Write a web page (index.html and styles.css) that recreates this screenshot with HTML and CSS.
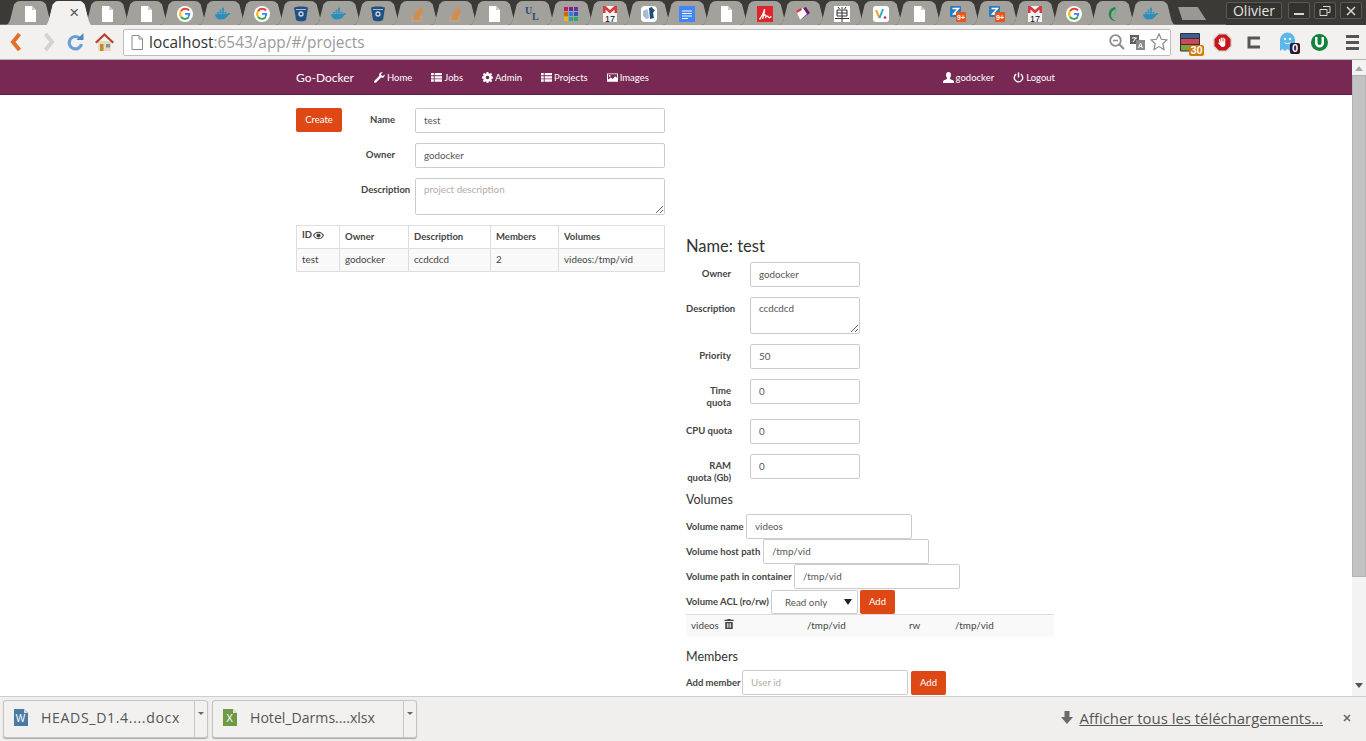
FILE: index.html
```html
<!DOCTYPE html>
<html lang="en">
<head>
    <meta charset="UTF-8">
    <meta name="viewport" content="width=device-width, initial-scale=1.0">
    <title>Go-Docker</title>
    <link rel="stylesheet" href="styles.css">
</head>

<body>
    <svg class="defs" aria-hidden="true">
        <symbol id="i-doc" viewBox="0 0 16 16"><path d="M3 0h7l4 4v12H3z" fill="#fff"/><path d="M10 0l4 4h-4z" fill="#c9c9c9"/></symbol>
        <symbol id="i-google" viewBox="0 0 16 16"><circle cx="8" cy="8" r="8" fill="#fff"/><path d="M12 4.500A5 5 0 0 0 4 5.200" fill="none" stroke="#ea4335" stroke-width="2"/><path d="M4 5.200a5 5 0 0 0 0 5.600" fill="none" stroke="#fbbc05" stroke-width="2"/><path d="M4 10.800a5 5 0 0 0 7.800.4" fill="none" stroke="#34a853" stroke-width="2"/><path d="M8 7h5.200c.2 2-.4 3.200-1.400 4.200L10.400 10c.5-.4.800-.8.900-1.300H8z" fill="#4285f4"/></symbol>
        <symbol id="i-docker" viewBox="0 0 16 16"><path d="M0 8h12c.5-1 1.500-1.300 3-1 0 1-.7 2-2 2.200C12 12 9 13.500 5.500 13.500 2 13.500.5 11 0 8z" fill="#2a8fbd"/><path d="M2 6h2v1.500H2zM4.500 6h2v1.500h-2zM7 6h2v1.500H7zM4.500 3.800h2v1.800h-2zM7 3.800h2v1.800H7zM7 1.800h2v1.700H7zM9.500 6h2v1.500h-2z" fill="#2a8fbd"/></symbol>
        <symbol id="i-bucket" viewBox="0 0 16 16"><path d="M1 1.500C4 0 12 0 15 1.500L13 14c-2 1.700-8 1.700-10 0z" fill="#205081"/><circle cx="8" cy="8" r="2" fill="none" stroke="#cfd8e3" stroke-width="1.300"/><path d="M3 3.500h10" stroke="#cfd8e3" stroke-width=".8"/></symbol>
        <symbol id="i-so" viewBox="0 0 16 16"><path d="M3 10v5h9v-5" fill="none" stroke="#c9a27e" stroke-width="1.300"/><path d="M5 13h5.500M5 10.800l5.500.6M5.500 8.300l5.300 1.500M6.800 5.700l4.800 2.800M8.800 3.300l3.800 4M11.500 1.500l2 5" stroke="#e8862e" stroke-width="1.500"/></symbol>
        <symbol id="i-grid" viewBox="0 0 16 16"><path d="M1 1h4v4H1z" fill="#c2185b"/><path d="M6 1h4v4H6z" fill="#7b1fa2"/><path d="M11 1h4v4h-4z" fill="#5e35b1"/><path d="M1 6h4v4H1z" fill="#c56a12"/><path d="M6 6h4v4H6z" fill="#1e88e5"/><path d="M11 6h4v4h-4z" fill="#3f51b5"/><path d="M1 11h4v4H1z" fill="#fbb300"/><path d="M6 11h4v4H6z" fill="#26a69a"/><path d="M11 11h4v4h-4z" fill="#22b35e"/></symbol>
        <symbol id="i-gmail" viewBox="0 0 16 16"><path d="M1 0h14v16H1z" fill="#f4f4f4"/><path d="M1 0h2.500L8 4l4.500-4H15v7h-2.500V3.500L8 7.500 3.500 3.500V7H1z" fill="#d8393b"/></symbol>
        <symbol id="i-france" viewBox="0 0 16 16"><rect width="16" height="16" rx="4" fill="#fff"/><path d="M2 5l4-2 1 2 1 7-3 1-3-3z" fill="#a7bcd0"/><path d="M8 2l3-1 1 2 2 1-2 3 1 5-4 1z" fill="#1f4e79"/></symbol>
        <symbol id="i-gdoc" viewBox="0 0 16 16"><rect width="16" height="16" rx="1" fill="#4285f4"/><path d="M3 5h10M3 7.500h10M3 10h10M3 12.500h6" stroke="#fff" stroke-width="1"/></symbol>
        <symbol id="i-acrobat" viewBox="0 0 16 16"><rect width="16" height="16" fill="#e0242c"/><path d="M2.500 13.500C5 10 7 6 7.500 3c.5 3-1.500 8-2 10M7 9.500c1.500-1 2-.5 1.800 1.500 1-1 2-1.500 2.500 0 .5 1 2 .5 3-.5" fill="none" stroke="#fff" stroke-width="1.300"/></symbol>
        <symbol id="i-book" viewBox="0 0 16 16"><path d="M1 5l10-4 4 6-10 7z" fill="#6a1b7a"/><path d="M1 5l7-3 4 6-7 6z" fill="#fff"/><path d="M1 5l5-3 1 2-5 3z" fill="#d8393b"/></symbol>
        <symbol id="i-kanji" viewBox="0 0 16 16"><rect width="16" height="16" fill="#fff"/><path d="M4 1l1.500 2M8 1v2M12 1l-1.500 2M3 4h10v6H3zM3 7h10M8 4v12M1 12.500h14" fill="none" stroke="#333" stroke-width="1"/></symbol>
        <symbol id="i-vee" viewBox="0 0 16 16"><rect width="16" height="16" rx="3" fill="#fff"/><path d="M3 4l3.500 8" stroke="#f5a623" stroke-width="2"/><path d="M6.500 12L10 3" stroke="#22b3c9" stroke-width="2"/><circle cx="12" cy="11.500" r="1.300" fill="#d0215f"/></symbol>
        <symbol id="i-zotero" viewBox="0 0 16 16"><rect width="11" height="11" rx="1" fill="#2a7cc0"/><path d="M2.500 2.500h6L3.500 8H9" fill="none" stroke="#fff" stroke-width="1.500"/><rect x="6" y="6" width="10" height="10" rx="1" fill="#e8561e"/></symbol>
        <symbol id="i-leaf" viewBox="0 0 16 16"><path d="M10 1C5 2 3 6 4 10s4 5 7 5c-3-1-5-3-5-6s2-5 5-6z" fill="#1c8a4b"/><path d="M12 4c-2 1-3 3-2 6" fill="none" stroke="#57b87c" stroke-width="1.300"/></symbol>
        <symbol id="g-wrench" viewBox="0 0 12 12"><path d="M11.500 2.600L9.700 4.400 8 3.900 7.600 2.300 9.400.5C7.800-.1 6 .8 5.700 2.500c-.1.600 0 1.200.1 1.700L.5 9.500c-.6.600-.6 1.300-.1 1.900.6.600 1.400.6 2 0l5.300-5.300c.5.200 1.100.2 1.700.1 1.700-.4 2.600-2 2.100-3.600z"/></symbol>
        <symbol id="g-list" viewBox="0 0 12 12"><path d="M0 1h3v2.500H0zM4 1h8v2.500H4zM0 4.500h3V7H0zM4 4.500h8V7H4zM0 8h3v2.500H0zM4 8h8v2.500H4z"/></symbol>
        <symbol id="g-cog" viewBox="0 0 12 12"><path fill-rule="evenodd" d="M5 0h2l.3 1.600 1 .4L9.700 1l1.400 1.400-1 1.400.4 1L12 5v2l-1.500.3-.4 1 1 1.400-1.400 1.400-1.400-1-1 .4L7 12H5l-.3-1.500-1-.4-1.400 1L.9 9.700l1-1.400-.4-1L0 7V5l1.500-.3.4-1-1-1.300L2.300 1l1.400 1 1-.4zM6 4a2 2 0 1 0 0 4 2 2 0 0 0 0-4z"/></symbol>
        <symbol id="g-picture" viewBox="0 0 12 12"><path fill-rule="evenodd" d="M0 1.500h12v9H0zM1 2.500v6l3-2.500 2 1.500 3-3 2 2v-4zM3 3.300a1 1 0 1 1 0 2 1 1 0 0 1 0-2z"/></symbol>
        <symbol id="g-user" viewBox="0 0 12 12"><path d="M6 0c1.700 0 2.700 1.300 2.700 3S7.800 6.300 7.500 7c0 1 3.500 1.500 4.500 3v2H0v-2c1-1.500 4.500-2 4.500-3-.3-.7-1.200-2.300-1.200-4S4.300 0 6 0z"/></symbol>
        <symbol id="g-off" viewBox="0 0 12 12"><path d="M5.200.5h1.600V6H5.200z"/><path d="M3.500 2.300a4.600 4.600 0 1 0 5 0" fill="none" stroke="currentColor" stroke-width="1.500"/></symbol>
        <symbol id="g-eye" viewBox="0 0 12 12"><path fill-rule="evenodd" d="M6 2c3 0 5 2 6 4-1 2-3 4-6 4S1 8 0 6c1-2 3-4 6-4zM1.300 6C2.200 7.500 3.800 9 6 9s3.800-1.500 4.700-3C9.800 4.500 8.200 3 6 3S2.200 4.500 1.300 6zM6 3.700a2.300 2.300 0 1 1 0 4.600 2.300 2.300 0 0 1 0-4.600z"/></symbol>
        <symbol id="g-trash" viewBox="0 0 12 12"><path d="M4 0h4v1h3.500v1.500H.5V1H4zM1.500 3.500h9V12h-9zM3.500 5v5.500h1V5zM5.500 5v5.500h1V5zM7.500 5v5.500h1V5z"/></symbol>
    </svg>

    <div class="app">
        <div class="tabstrip">
            <div class="tabs">
                <div class="tab"><div class="tab-face"><svg class="fav"><use href="#i-doc"/></svg></div></div>
                <div class="tab tab-active"><div class="tab-face"><span class="tab-close">&times;</span></div></div>
                <div class="tab"><div class="tab-face"><svg class="fav"><use href="#i-doc"/></svg></div></div>
                <div class="tab"><div class="tab-face"><svg class="fav"><use href="#i-doc"/></svg></div></div>
                <div class="tab"><div class="tab-face"><svg class="fav"><use href="#i-google"/></svg></div></div>
                <div class="tab"><div class="tab-face"><svg class="fav"><use href="#i-docker"/></svg></div></div>
                <div class="tab"><div class="tab-face"><svg class="fav"><use href="#i-google"/></svg></div></div>
                <div class="tab"><div class="tab-face"><svg class="fav"><use href="#i-bucket"/></svg></div></div>
                <div class="tab"><div class="tab-face"><svg class="fav"><use href="#i-docker"/></svg></div></div>
                <div class="tab"><div class="tab-face"><svg class="fav"><use href="#i-bucket"/></svg></div></div>
                <div class="tab"><div class="tab-face"><svg class="fav"><use href="#i-so"/></svg></div></div>
                <div class="tab"><div class="tab-face"><svg class="fav"><use href="#i-so"/></svg></div></div>
                <div class="tab"><div class="tab-face"><svg class="fav"><use href="#i-doc"/></svg></div></div>
                <div class="tab"><div class="tab-face"><svg class="fav" viewBox="0 0 16 16"><text x="0" y="8" class="fav-serif">U</text><text x="7" y="14" class="fav-serif">L</text></svg></div></div>
                <div class="tab"><div class="tab-face"><svg class="fav"><use href="#i-grid"/></svg></div></div>
                <div class="tab"><div class="tab-face"><svg class="fav"><use href="#i-gmail"/><text x="8" y="15.500" class="fav-num">17</text></svg></div></div>
                <div class="tab"><div class="tab-face"><svg class="fav"><use href="#i-france"/></svg></div></div>
                <div class="tab"><div class="tab-face"><svg class="fav"><use href="#i-gdoc"/></svg></div></div>
                <div class="tab"><div class="tab-face"><svg class="fav"><use href="#i-doc"/></svg></div></div>
                <div class="tab"><div class="tab-face"><svg class="fav"><use href="#i-acrobat"/></svg></div></div>
                <div class="tab"><div class="tab-face"><svg class="fav"><use href="#i-book"/></svg></div></div>
                <div class="tab"><div class="tab-face"><svg class="fav"><use href="#i-kanji"/></svg></div></div>
                <div class="tab"><div class="tab-face"><svg class="fav"><use href="#i-vee"/></svg></div></div>
                <div class="tab"><div class="tab-face"><svg class="fav"><use href="#i-doc"/></svg></div></div>
                <div class="tab"><div class="tab-face"><svg class="fav"><use href="#i-zotero"/><text x="11" y="14" class="fav-badge">9+</text></svg></div></div>
                <div class="tab"><div class="tab-face"><svg class="fav"><use href="#i-zotero"/><text x="11" y="14" class="fav-badge">9+</text></svg></div></div>
                <div class="tab"><div class="tab-face"><svg class="fav"><use href="#i-gmail"/><text x="8" y="15.500" class="fav-num">17</text></svg></div></div>
                <div class="tab"><div class="tab-face"><svg class="fav"><use href="#i-google"/></svg></div></div>
                <div class="tab"><div class="tab-face"><svg class="fav"><use href="#i-leaf"/></svg></div></div>
                <div class="tab"><div class="tab-face"><svg class="fav"><use href="#i-docker"/></svg></div></div>
                <div class="new-tab"></div>
            </div>
            <div class="window-btns">
                <div class="win-btn win-user">Olivier</div>
                <div class="win-btn win-small">
                    <svg width="12" height="12" viewBox="0 0 12 12"><path d="M1 8h10v2H1z" fill="#d8d8d4"/></svg>
                </div>
                <div class="win-btn win-small">
                    <svg width="12" height="12" viewBox="0 0 12 12"><path d="M4 1.500h7v6H8.500M1 4.500h7v6H1z" fill="none" stroke="#d8d8d4"/></svg>
                </div>
                <div class="win-btn win-close">
                    <svg width="12" height="12" viewBox="0 0 12 12"><path d="M2 2l8 8M10 2l-8 8" stroke="#d8d8d4" stroke-width="1.500"/></svg>
                </div>
            </div>
        </div>

        <div class="toolbar">
            <svg class="tool tool-back" width="12" height="20" viewBox="0 0 12 20"><path d="M9.500 2L3 10l6.500 8" fill="none" stroke="#e2702a" stroke-width="4"/></svg>
            <svg class="tool tool-forward" width="12" height="20" viewBox="0 0 12 20"><path d="M2.500 2L9 10l-6.500 8" fill="none" stroke="#d4d3d0" stroke-width="4"/></svg>
            <svg class="tool tool-reload" width="17" height="18" viewBox="0 0 17 18"><path d="M13 5.500A6.200 6.200 0 1 0 14.500 11" fill="none" stroke="#6b9fd4" stroke-width="3.200"/><path d="M9.500 7h7V0z" fill="#4f86c0"/></svg>
            <svg class="tool tool-home" width="19" height="18" viewBox="0 0 19 18"><path d="M3 8h13v10H3z" fill="#e6d9c0"/><path d="M0 9l9.500-9L19 9l-1.500 1.500-8-7.500-8 7.500z" fill="#b8402c"/><path d="M5 11h3.500v7H5z" fill="#c78a28"/><path d="M11 11h4v3.500h-4z" fill="#8a8f96"/></svg>
            <div class="urlbar">
                <svg class="url-page" width="12" height="15" viewBox="0 0 12 15"><path d="M1 .5h7l3.500 3.500v10.500H1z" fill="#fff" stroke="#8a8a8a"/><path d="M8 .5V4h3.500" fill="none" stroke="#8a8a8a"/></svg>
                <span class="url-host">localhost</span><span class="url-rest">:6543/app/#/projects</span>
                <svg class="url-zoom" width="16" height="16" viewBox="0 0 16 16"><circle cx="6.500" cy="6.500" r="5.300" fill="none" stroke="#8f8f8f" stroke-width="1.800"/><path d="M4 6.500h5" stroke="#8f8f8f" stroke-width="1.500"/><path d="M10.500 10.500L15 15" stroke="#8f8f8f" stroke-width="2.200"/></svg>
                <svg class="url-translate" width="15" height="15" viewBox="0 0 15 15"><path d="M0 0h9v9H0z" fill="#5f5f5f"/><path d="M6 5h9v10H6z" fill="#8a8a8a"/><path d="M2 3h5M4.500 2v1M3 7l3-4" stroke="#fff" fill="none"/><path d="M8.500 13l2-5 2 5M9.500 11.500h2" stroke="#fff" fill="none"/></svg>
                <svg class="url-star" width="18" height="18" viewBox="0 0 18 18"><path d="M9 1l2.400 5.300 5.600.6-4.200 3.800 1.200 5.800L9 13.600l-5 2.900 1.200-5.800L1 6.900l5.600-.6z" fill="#fff" stroke="#8a8a8a" stroke-width="1.200"/></svg>
            </div>
            <div class="ext ext-stack">
                <svg width="20" height="19" viewBox="0 0 20 19"><path d="M1 0h18v6H1z" fill="#3e5c94"/><path d="M1 6h18v6H1z" fill="#c9495a"/><path d="M1 12h18v6H1z" fill="#7ea338"/><path d="M1 5.500h18M1 11.500h18M.5.500h19v17.500H.500z" fill="none" stroke="#333"/></svg>
                <span class="ext-badge badge-orange">30</span>
            </div>
            <svg class="ext-stop" width="19" height="19" viewBox="0 0 19 19"><path d="M5.500 0h8L19 5.500v8L13.500 19h-8L0 13.500v-8z" fill="#d8d8d8"/><path d="M6 1.500h7L17.500 6v7L13 17.500H6L1.500 13V6z" fill="#c8141b"/><path d="M6 6h1.200v3H6zM7.700 4.800h1.200V9H7.700zM9.400 4.500h1.200V9H9.400zM11.100 5.500h1.200V9h-1.200zM6 8.500h6.300v3c0 1.500-1 2.500-2.500 2.500-1.300 0-2-.6-2.500-1.500L5 10l.8-.5 1 1z" fill="#fff"/></svg>
            <svg class="ext-c" width="14" height="13" viewBox="0 0 14 13"><path d="M13 2H2v9h11" fill="none" stroke="#555" stroke-width="3"/></svg>
            <div class="ext ext-ghost">
                <svg width="17" height="20" viewBox="0 0 17 20"><path d="M1 8a7.500 7.500 0 0 1 15 0v11l-2.500-2-2.500 2-2.500-2L6 19l-2.500-2L1 19z" fill="#5cb8e8"/><circle cx="6" cy="7" r="1.200" fill="#fff"/><circle cx="11" cy="7" r="1.200" fill="#fff"/><path d="M5.500 10.500c1.500 1.500 4.500 1.500 6 0" fill="none" stroke="#fff"/></svg>
                <span class="ext-badge badge-dark">0</span>
            </div>
            <svg class="ext-torrent" width="17" height="17" viewBox="0 0 17 17"><circle cx="8.500" cy="8.500" r="8.500" fill="#11823b"/><path d="M4 3v6a4.500 4.500 0 0 0 9 0V3h-2.500v6a2 2 0 0 1-4 0V3z" fill="#fff"/><path d="M7.500 0h2v4h-2z" fill="#11823b"/></svg>
            <div class="menu-btn"><span></span><span></span><span></span></div>
        </div>

        <div class="viewport">
            <div class="page">
                <nav class="navbar">
                    <a class="brand">Go-Docker</a>
                    <a class="nav-link"><svg class="glyph"><use href="#g-wrench"/></svg>Home</a>
                    <a class="nav-link"><svg class="glyph"><use href="#g-list"/></svg>Jobs</a>
                    <a class="nav-link"><svg class="glyph"><use href="#g-cog"/></svg>Admin</a>
                    <a class="nav-link"><svg class="glyph"><use href="#g-list"/></svg>Projects</a>
                    <a class="nav-link"><svg class="glyph"><use href="#g-picture"/></svg>Images</a>
                    <a class="nav-link nav-user"><svg class="glyph"><use href="#g-user"/></svg>godocker</a>
                    <a class="nav-link nav-logout"><svg class="glyph"><use href="#g-off"/></svg>Logout</a>
                </nav>

                <div class="columns">
                    <section class="col-left">
                        <form class="project-form">
                            <button type="button" class="btn btn-create">Create</button>
                            <label class="lbl lbl-left">Name</label>
                            <input class="field" type="text" value="test">
                            <span></span>
                            <label class="lbl lbl-left">Owner</label>
                            <input class="field" type="text" value="godocker">
                            <span></span>
                            <label class="lbl lbl-left">Description</label>
                            <textarea class="field area" placeholder="project description"></textarea>
                        </form>

                        <table class="projects">
                            <thead>
                                <tr>
                                    <th class="c-id">ID<svg class="glyph eye"><use href="#g-eye"/></svg></th>
                                    <th class="c-owner">Owner</th>
                                    <th class="c-desc">Description</th>
                                    <th class="c-members">Members</th>
                                    <th>Volumes</th>
                                </tr>
                            </thead>
                            <tbody>
                                <tr>
                                    <td>test</td>
                                    <td>godocker</td>
                                    <td>ccdcdcd</td>
                                    <td>2</td>
                                    <td>videos:/tmp/vid</td>
                                </tr>
                            </tbody>
                        </table>
                    </section>

                    <section class="col-right">
                        <h3 class="detail-title">Name: test</h3>
                        <div class="row">
                            <label class="lbl lbl-right">Owner</label>
                            <input class="field short" type="text" value="godocker">
                        </div>
                        <div class="row">
                            <label class="lbl lbl-right">Description</label>
                            <textarea class="field short area">ccdcdcd</textarea>
                        </div>
                        <div class="row">
                            <label class="lbl lbl-right">Priority</label>
                            <input class="field short" type="text" value="50">
                        </div>
                        <div class="row">
                            <label class="lbl lbl-right">Time<br>quota</label>
                            <input class="field short" type="text" value="0">
                        </div>
                        <div class="row">
                            <label class="lbl lbl-right">CPU quota</label>
                            <input class="field short" type="text" value="0">
                        </div>
                        <div class="row row-last">
                            <label class="lbl lbl-right">RAM<br>quota (Gb)</label>
                            <input class="field short" type="text" value="0">
                        </div>

                        <h4 class="sub-title">Volumes</h4>
                        <div class="inline-row">
                            <label class="lbl-inline w-name">Volume name</label>
                            <input class="field wide" type="text" value="videos">
                        </div>
                        <div class="inline-row">
                            <label class="lbl-inline w-host">Volume host path</label>
                            <input class="field wide" type="text" value="/tmp/vid">
                        </div>
                        <div class="inline-row">
                            <label class="lbl-inline w-path">Volume path in container</label>
                            <input class="field wide" type="text" value="/tmp/vid">
                        </div>
                        <div class="inline-row">
                            <label class="lbl-inline w-acl">Volume ACL (ro/rw)</label>
                            <div class="select">Read only<span class="select-arrow"></span></div>
                            <button type="button" class="btn btn-add">Add</button>
                        </div>
                        <div class="volume-line">
                            <span class="v-name">videos<svg class="glyph trash"><use href="#g-trash"/></svg></span>
                            <span>/tmp/vid</span>
                            <span>rw</span>
                            <span>/tmp/vid</span>
                        </div>

                        <h4 class="sub-title members-title">Members</h4>
                        <div class="inline-row">
                            <label class="lbl-inline w-member">Add member</label>
                            <input class="field wide" type="text" placeholder="User id">
                            <button type="button" class="btn btn-add btn-member">Add</button>
                        </div>
                    </section>
                </div>
            </div>

            <div class="scrollbar">
                <div class="arrow-up"></div>
                <div class="thumb"></div>
                <div class="arrow-down"></div>
            </div>
        </div>

        <div class="downloads">
            <div class="dl-item">
                <div class="dl-main">
                    <svg width="14" height="17" viewBox="0 0 14 17"><path d="M0 0h10l4 4v13H0z" fill="#4a7ba6"/><path d="M10 0l4 4h-4z" fill="#cfe0ee"/><text x="6.500" y="13" class="fav-file">W</text></svg>
                    <span class="dl-name dl-caps">HEADS_D1.4....docx</span>
                </div>
                <div class="dl-more"><span></span></div>
            </div>
            <div class="dl-item">
                <div class="dl-main">
                    <svg width="14" height="17" viewBox="0 0 14 17"><path d="M0 0h10l4 4v13H0z" fill="#6f9a45"/><path d="M10 0l4 4h-4z" fill="#dbe8c9"/><text x="6.500" y="13" class="fav-file">X</text></svg>
                    <span class="dl-name">Hotel_Darms....xlsx</span>
                </div>
                <div class="dl-more"><span></span></div>
            </div>
            <svg class="dl-arrow" width="12" height="13" viewBox="0 0 12 13"><path d="M3.500 0h5v6H12l-6 7-6-7h3.500z" fill="#6a6a6a"/></svg>
            <a class="dl-all">Afficher tous les téléchargements...</a>
            <svg class="dl-close" width="8" height="8" viewBox="0 0 8 8"><path d="M1 1l6 6M7 1L1 7" stroke="#666" stroke-width="1.600"/></svg>
        </div>
    </div>
</body>
</html>
```

FILE: styles.css
```css
* {
    box-sizing: border-box;
}
html, body {
    margin: 0;
    padding: 0;
    height: 100%;
    overflow: hidden;
}
body {
    font-family: Lato, "Open Sans", Arial, sans-serif;
    font-size: 9.8px;
    color: #333;
    background: #fff;
}
.defs {
    width: 0;
    height: 0;
    display: block;
}
.fav-serif {
    font-family: "Liberation Serif", serif;
    font-size: 10px;
    font-weight: bold;
    fill: #2d4a78;
}
.fav-num {
    font-family: "Liberation Sans", sans-serif;
    font-size: 9px;
    text-anchor: middle;
    fill: #111;
}
.fav-badge {
    font-family: "Liberation Sans", sans-serif;
    font-size: 7px;
    font-weight: bold;
    text-anchor: middle;
    fill: #fff;
}
.fav-file {
    font-family: "Liberation Sans", sans-serif;
    font-size: 10px;
    text-anchor: middle;
    fill: #fff;
}
.app {
    width: 1366px;
    height: 741px;
    display: flex;
    flex-direction: column;
}

/* browser tabs */
.tabstrip {
    height: 25px;
    flex: none;
    display: flex;
    justify-content: space-between;
    background: #3b3a36;
}
.tabs {
    display: flex;
    padding: 1px 0 0 5px;
    box-shadow: inset 0 -1px 0 #6a6965;
    flex: 1;
}
.tab {
    width: 50px;
    height: 24px;
    flex: none;
    margin-right: -11.34px;
    background: #6e6d69;
    clip-path: polygon(0 100%, 3px 96%, 5px 80%, 9px 14%, 12px 2%, 15px 0, 35px 0, 38px 2%, 41px 14%, 45px 80%, 47px 96%, 50px 100%);
}
.tab-face {
    height: 100%;
    margin: 0 1px;
    display: flex;
    justify-content: center;
    align-items: flex-start;
    padding-top: 5px;
    background: #a3a19c;
    clip-path: polygon(0 100%, 2px 96%, 4px 80%, 8px 14%, 11px 2%, 14px 0, 34px 0, 37px 2%, 40px 14%, 44px 80%, 46px 96%, 48px 100%);
}
.tab-active {
    position: relative;
    z-index: 2;
    height: 25px;
    background: #f2f1f0;
}
.tab-active .tab-face {
    background: #f2f1f0;
    padding: 2px 0 0 11px;
}
.tab-close {
    font-family: "Liberation Sans", sans-serif;
    font-size: 17px;
    line-height: 20px;
    color: #555;
}
.fav {
    width: 16px;
    height: 16px;
}
.new-tab {
    width: 28px;
    height: 13px;
    margin: 6px 0 0 13px;
    background: #9a9893;
    clip-path: polygon(0 0, 70% 0, 100% 100%, 15% 100%);
}
.window-btns {
    display: flex;
    padding-top: 2px;
    height: 25px;
    width: 140px;
    background: #3b3a36;
}
.win-btn {
    height: 17px;
    display: flex;
    align-items: center;
    justify-content: center;
    color: #e4e4e0;
    border: 1px solid #5a5954;
    border-radius: 2px;
    background: #33322e;
}
.win-user {
    width: 56px;
    font-size: 14px;
    font-family: "Open Sans", sans-serif;
    margin-right: 6px;
}
.win-small {
    width: 22px;
    margin-right: 4px;
}
.win-close {
    width: 22px;
}

/* browser toolbar */
.toolbar {
    height: 35px;
    flex: none;
    display: flex;
    align-items: center;
    background: #f2f1f0;
    border-bottom: 1px solid #b5b4b0;
    padding-left: 10px;
}
.tool {
    flex: none;
}
.tool-forward {
    margin-left: 21px;
}
.tool-reload {
    margin-left: 12px;
}
.tool-home {
    margin-left: 11px;
}
.urlbar {
    width: 1048px;
    height: 27px;
    margin-left: 9px;
    display: flex;
    align-items: center;
    background: #fff;
    border: 1px solid #bdbdbb;
    border-radius: 2px;
    font-family: "Open Sans", sans-serif;
    font-size: 15.4px;
    padding-left: 7px;
}
.url-page {
    margin-right: 6px;
}
.url-host {
    color: #333;
}
.url-rest {
    color: #9a9a9a;
    flex: 1;
}
.url-translate {
    margin-left: 5px;
}
.url-star {
    margin: 0 2px 0 5px;
}
.ext {
    position: relative;
    display: flex;
    flex: none;
}
.ext-stack {
    margin-left: 9px;
}
.ext-badge {
    position: absolute;
    font-family: "Liberation Sans", sans-serif;
    font-weight: bold;
    font-size: 11px;
    line-height: 10px;
    height: 11px;
    color: #fff;
    text-align: center;
    border-radius: 2px;
}
.badge-orange {
    background: #d27a0c;
    left: 9px;
    top: 12px;
    width: 15px;
}
.badge-dark {
    background: #2c1437;
    left: 11px;
    top: 11px;
    width: 10px;
}
.ext-stop {
    margin-left: 13px;
}
.ext-c {
    margin-left: 15px;
}
.ext-ghost {
    margin-left: 18px;
}
.ext-torrent {
    margin-left: 15px;
}
.menu-btn {
    margin-left: 18px;
    width: 13px;
    display: flex;
    flex-direction: column;
    gap: 3px;
}
.menu-btn span {
    height: 3px;
    background: #555;
}

/* page */
.viewport {
    height: 636px;
    flex: none;
    display: flex;
    overflow: hidden;
}
.page {
    flex: 1;
    overflow: hidden;
}
.navbar {
    height: 35px;
    display: flex;
    align-items: center;
    padding: 0 297px 0 296px;
    background: #772953;
    border-bottom: 1px solid #5c1f40;
    color: #fff;
}
.brand {
    font-size: 12px;
    margin-right: 20px;
}
.nav-link {
    display: flex;
    align-items: center;
    margin-right: 19px;
    font-size: 9.5px;
}
.nav-user {
    margin-left: auto;
}
.nav-logout {
    margin-right: 0;
}
.glyph {
    width: 11px;
    height: 11px;
    margin-right: 2px;
    fill: currentColor;
    flex: none;
}
.columns {
    display: flex;
    gap: 21px;
    padding-left: 296px;
}
.col-left,
.col-right {
    width: 369px;
    flex: none;
}
.col-left {
    padding-top: 13px;
}
.project-form {
    display: grid;
    grid-template-columns: 65px 54px 250px;
    row-gap: 10px;
    margin-bottom: 10px;
}
.btn {
    height: 24px;
    padding: 0 0 1px;
    border: none;
    border-radius: 2px;
    background: #dd4814;
    color: #fff;
    font-family: inherit;
    font-size: 9.5px;
}
.btn-create {
    width: 46px;
}
.lbl {
    display: block;
    font-size: 9.5px;
    font-weight: 700;
    line-height: 12px;
    padding-top: 6px;
    text-align: right;
    white-space: nowrap;
    color: #444;
}
.lbl-left {
    width: 34px;
}
.lbl-right {
    width: 45px;
    margin-right: 19px;
    flex: none;
}
.field {
    display: block;
    height: 25px;
    padding: 0 8px 2px;
    border: 1px solid #ccc;
    border-radius: 2px;
    background: #fff;
    font-family: inherit;
    font-size: 9.8px;
    color: #555;
    outline: none;
}
.field::placeholder {
    color: #b5aca5;
    opacity: 1;
}
.area {
    height: 37px;
    padding-top: 4px;
    resize: vertical;
}
.projects {
    width: 369px;
    border-collapse: collapse;
    table-layout: fixed;
}
.projects th,
.projects td {
    height: 23px;
    padding: 0 5px 2px;
    border: 1px solid #ddd;
    text-align: left;
    font-size: 9.8px;
    white-space: nowrap;
}
.projects th {
    font-size: 9.5px;
    font-weight: 700;
    color: #444;
}
.projects td {
    background: #f9f9f9;
    color: #444;
}
.c-id {
    width: 43px;
}
.c-owner {
    width: 69px;
}
.c-desc {
    width: 82px;
}
.c-members {
    width: 68px;
}
.eye {
    margin: 0 0 2px 1px;
    vertical-align: middle;
}
.detail-title {
    margin: 141px 0 6px;
    font-size: 16.5px;
    font-weight: 400;
    line-height: 20px;
}
.row {
    display: flex;
    align-items: flex-start;
    margin-bottom: 10px;
}
.row-last {
    margin-bottom: 0;
}
.short {
    width: 110px;
}
.sub-title {
    margin: 0;
    padding-top: 2px;
    font-size: 12.5px;
    font-weight: 400;
    line-height: 28px;
}
.inline-row {
    display: flex;
    height: 25px;
}
.lbl-inline {
    font-size: 9.5px;
    font-weight: 700;
    line-height: 25px;
    white-space: nowrap;
    flex: none;
    color: #444;
}
.w-name {
    width: 60px;
}
.w-host {
    width: 77px;
}
.w-path {
    width: 108px;
}
.w-acl {
    width: 85px;
}
.w-member {
    width: 56px;
}
.wide {
    width: 166px;
}
.select {
    width: 87px;
    height: 24px;
    margin-top: 1px;
    padding: 0 5px 0 13px;
    display: flex;
    align-items: center;
    justify-content: space-between;
    border: 1px solid #ccc;
    border-radius: 2px;
    color: #555;
}
.select-arrow {
    width: 0;
    height: 0;
    border-left: 4px solid transparent;
    border-right: 4px solid transparent;
    border-top: 6px solid #222;
}
.btn-add {
    width: 35px;
    margin: 1px 0 0 2px;
}
.btn-member {
    margin-left: 3px;
}
.volume-line {
    width: 368px;
    height: 23px;
    display: grid;
    grid-template-columns: 116px 102px 46px auto;
    align-items: center;
    padding: 0 0 2px 5px;
    background: #f9f9f9;
    border-top: 1px solid #ddd;
    color: #444;
}
.v-name {
    display: flex;
    align-items: center;
}
.trash {
    width: 10px;
    height: 10px;
    margin: 0 0 2px 5px;
}
.members-title {
    padding-top: 6px;
    line-height: 27px;
}

/* scrollbar */
.scrollbar {
    width: 14px;
    flex: none;
    display: flex;
    flex-direction: column;
    align-items: center;
    background: #f3f3f3;
    padding-top: 6px;
}
.arrow-up {
    width: 0;
    height: 0;
    border-left: 4px solid transparent;
    border-right: 4px solid transparent;
    border-bottom: 5px solid #a8a8a8;
}
.thumb {
    width: 14px;
    height: 502px;
    margin-top: 4px;
    background: #c2c2c2;
    border: 1px solid #b3b3b3;
}
.arrow-down {
    width: 0;
    height: 0;
    margin-top: 106px;
    border-left: 4px solid transparent;
    border-right: 4px solid transparent;
    border-top: 5px solid #555;
}

/* download bar */
.downloads {
    height: 45px;
    flex: none;
    display: flex;
    align-items: center;
    padding: 0 15px 0 3px;
    background: #f0efee;
    border-top: 1px solid #cfcecc;
}
.dl-item {
    width: 205px;
    height: 38px;
    display: flex;
    border: 1px solid #c6c5c2;
    border-radius: 3px;
    background: #f2f1f0;
    box-shadow: 0 1px 1px #aaa;
}
.dl-item + .dl-item {
    margin-left: 4px;
}
.dl-main {
    flex: 1;
    display: flex;
    align-items: center;
    padding: 0 0 3px 10px;
    font-family: "Open Sans", sans-serif;
    font-size: 14.1px;
    color: #555;
}
.dl-name {
    margin-left: 13px;
    white-space: nowrap;
}
.dl-caps {
    letter-spacing: .65px;
}
.dl-more {
    width: 13px;
    border-left: 1px solid #c6c5c2;
    display: flex;
    justify-content: center;
    padding-top: 11px;
}
.dl-more span {
    width: 0;
    height: 0;
    border-left: 3px solid transparent;
    border-right: 3px solid transparent;
    border-top: 3px solid #666;
}
.dl-arrow {
    margin: 0 7px 3px auto;
}
.dl-all {
    margin-bottom: 3px;
    font-family: "Open Sans", sans-serif;
    font-size: 14.9px;
    color: #555;
    text-decoration: underline;
    white-space: nowrap;
}
.dl-close {
    margin: 0 0 3px 20px;
}
```
